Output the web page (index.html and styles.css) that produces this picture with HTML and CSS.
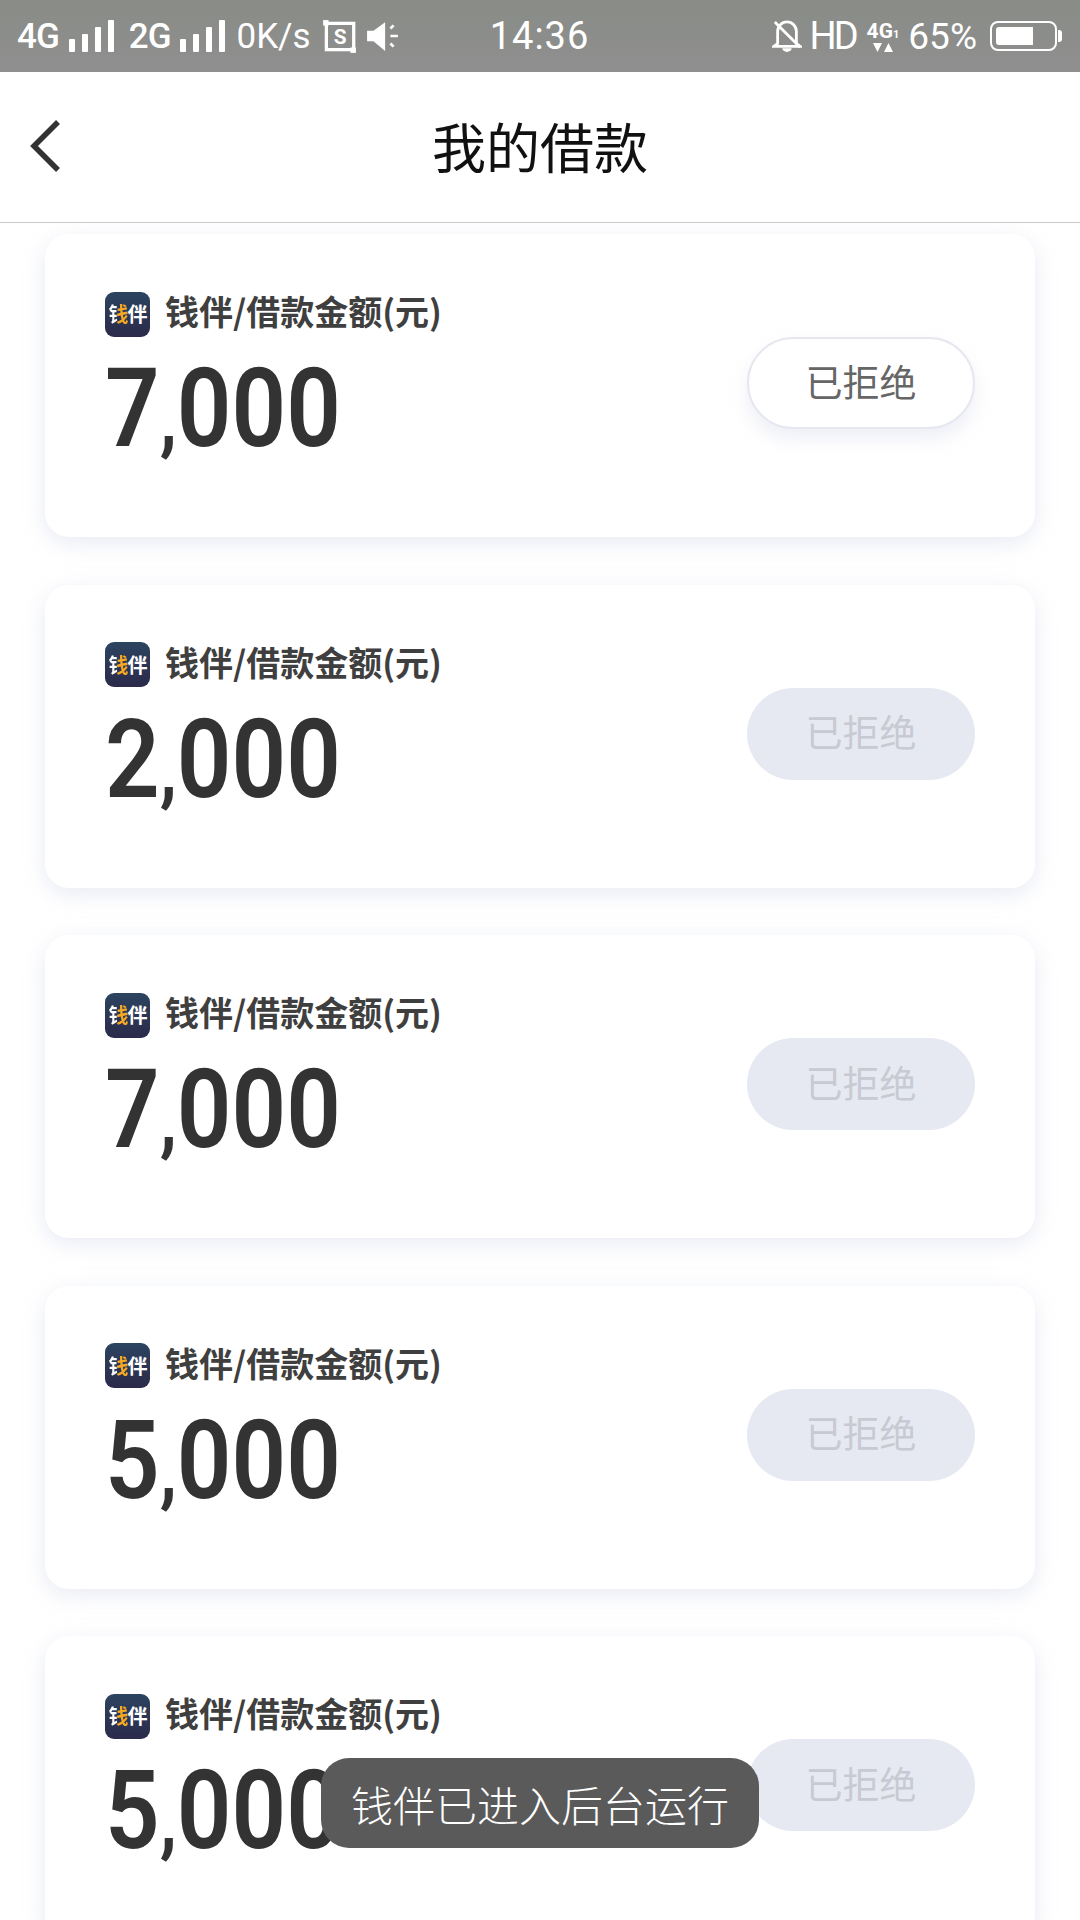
FILE: index.html
```html
<!DOCTYPE html>
<html lang="zh-CN">
<head>
    <meta charset="UTF-8">
    <meta name="viewport" content="width=device-width, initial-scale=1.0">
    <title>我的借款</title>
    <link rel="stylesheet" href="styles.css">
</head>
<body>
    <div class="phone">
        <div class="status-bar">
            <div class="status-left">
                <span class="net">4G</span>
                <svg class="signal" width="46" height="32" viewBox="0 0 46 32"><rect x="1" y="19" width="6" height="13" rx="1"/><rect x="14" y="14" width="6" height="18" rx="1"/><rect x="27" y="7" width="6" height="25" rx="1"/><rect x="40" y="0" width="6" height="32" rx="1"/></svg>
                <span class="net net-2g">2G</span>
                <svg class="signal" width="46" height="32" viewBox="0 0 46 32"><rect x="1" y="19" width="6" height="13" rx="1"/><rect x="14" y="14" width="6" height="18" rx="1"/><rect x="27" y="7" width="6" height="25" rx="1"/><rect x="40" y="0" width="6" height="32" rx="1"/></svg>
                <span class="speed">0K/s</span>
                <svg class="icon-shot" width="35" height="35" viewBox="0 0 32 32"><rect x="4" y="4" width="25" height="24" fill="none" stroke="#fff" stroke-width="3"/><rect x="1" y="1" width="5" height="5" fill="#fff"/><rect x="26" y="26" width="5" height="5" fill="#fff"/><text x="16.500" y="23" class="shot-letter">S</text></svg>
                <svg class="icon-sound" width="34" height="34" viewBox="0 0 32 32"><path d="M1 11h6L18 3v27L7 21H1z" fill="#fff"/><path d="M23 9l3-3M23 16h7M23 23l3 3" stroke="#fff" stroke-width="2.500" fill="none"/></svg>
            </div>
            <div class="status-time">14:36</div>
            <div class="status-right">
                <svg width="30" height="34" viewBox="0 0 32 34"><path d="M6 25V12a10 10 0 0 1 20 0v13l4 3H2z" fill="none" stroke="#fff" stroke-width="3"/><path d="M11 30h10a5 4 0 0 1-10 0z" fill="#fff"/><path d="M3 2l27 27" stroke="#fff" stroke-width="3"/></svg>
                <span class="hd">HD</span>
                <div class="net-small">
                    <span class="net-small-text">4G<small>1</small></span>
                    <svg width="20" height="10" viewBox="0 0 20 10"><path d="M0 1h9L4.500 10zM11 10h9L15.500 1z" fill="#fff"/></svg>
                </div>
                <span class="percent">65%</span>
                <div class="battery"><div class="battery-fill"></div></div>
                <div class="battery-tip"></div>
            </div>
        </div>

        <div class="header">
            <svg class="back" width="32" height="54" viewBox="0 0 32 54"><path d="M29 3L5 27l24 24" fill="none" stroke="#333" stroke-width="5.500"/></svg>
            <h1>我的借款</h1>
        </div>

        <div class="list">
            <div class="card">
                <div class="card-left">
                    <div class="card-title"><div class="logo"><span class="logo-qian">钱</span>伴</div><span class="card-label">钱伴/借款金额(元)</span></div>
                    <div class="amount">7<span class="comma">,</span>000</div>
                </div>
                <div class="btn btn-white">已拒绝</div>
            </div>
            <div class="card">
                <div class="card-left">
                    <div class="card-title"><div class="logo"><span class="logo-qian">钱</span>伴</div><span class="card-label">钱伴/借款金额(元)</span></div>
                    <div class="amount">2<span class="comma">,</span>000</div>
                </div>
                <div class="btn">已拒绝</div>
            </div>
            <div class="card">
                <div class="card-left">
                    <div class="card-title"><div class="logo"><span class="logo-qian">钱</span>伴</div><span class="card-label">钱伴/借款金额(元)</span></div>
                    <div class="amount">7<span class="comma">,</span>000</div>
                </div>
                <div class="btn">已拒绝</div>
            </div>
            <div class="card">
                <div class="card-left">
                    <div class="card-title"><div class="logo"><span class="logo-qian">钱</span>伴</div><span class="card-label">钱伴/借款金额(元)</span></div>
                    <div class="amount">5<span class="comma">,</span>000</div>
                </div>
                <div class="btn">已拒绝</div>
            </div>
            <div class="card">
                <div class="card-left">
                    <div class="card-title"><div class="logo"><span class="logo-qian">钱</span>伴</div><span class="card-label">钱伴/借款金额(元)</span></div>
                    <div class="amount">5<span class="comma">,</span>000</div>
                </div>
                <div class="btn">已拒绝</div>
            </div>
        </div>

        <div class="toast">钱伴已进入后台运行</div>
    </div>
</body>
</html>
```

FILE: styles.css
```css
* {
    box-sizing: border-box;
}
body {
    margin: 0;
    font-family: "Noto Sans CJK SC", Roboto, sans-serif;
    background-color: #fff;
}
.phone {
    position: relative;
    width: 1080px;
    height: 1920px;
    overflow: hidden;
    display: flex;
    flex-direction: column;
}

/* status bar */
.status-bar {
    height: 72px;
    flex-shrink: 0;
    padding: 0 18px 0 17px;
    display: grid;
    grid-template-columns: 1fr auto 1fr;
    align-items: center;
    color: #fff;
    background: linear-gradient(#898c87, #8f8f8f);
    font-family: Roboto, sans-serif;
}
.status-left,
.status-right {
    display: flex;
    align-items: center;
}
.status-right {
    justify-content: flex-end;
}
.net {
    font-size: 35px;
    font-weight: 500;
    letter-spacing: -1px;
}
.net-2g {
    margin-left: 15px;
}
.signal {
    fill: #fff;
    margin-left: 9px;
}
.speed {
    margin-left: 11px;
    font-size: 35px;
}
.icon-shot {
    margin-left: 11px;
}
.shot-letter {
    font-size: 19px;
    font-weight: 700;
    fill: #fff;
    text-anchor: middle;
}
.icon-sound {
    margin-left: 9px;
}
.status-time {
    font-size: 38px;
    letter-spacing: 1px;
}
.hd {
    margin-left: 8px;
    font-size: 38px;
    letter-spacing: -3px;
}
.net-small {
    margin-left: 11px;
    display: flex;
    flex-direction: column;
    align-items: center;
    line-height: 1;
}
.net-small-text {
    font-size: 21px;
    font-weight: 700;
}
.net-small-text small {
    font-size: 11px;
}
.percent {
    margin-left: 9px;
    font-size: 37px;
}
.battery {
    margin-left: 13px;
    width: 67px;
    height: 30px;
    padding: 4px;
    border: 2px solid #fff;
    border-radius: 8px;
}
.battery-fill {
    width: 68%;
    height: 100%;
    background-color: #fff;
    border-radius: 3px 0 0 3px;
}
.battery-tip {
    width: 4px;
    height: 12px;
    margin-left: 1px;
    background-color: #fff;
    border-radius: 0 3px 3px 0;
}

/* title bar */
.header {
    position: relative;
    height: 151px;
    flex-shrink: 0;
    padding-bottom: 3px;
    display: flex;
    align-items: center;
    justify-content: center;
    background-color: #fff;
    border-bottom: 1px solid #c9c9c9;
    z-index: 1;
}
.header h1 {
    margin: 0;
    font-size: 54px;
    font-weight: 400;
    color: #111;
}
.back {
    position: absolute;
    left: 29px;
    top: 47px;
}

/* loan cards */
.list {
    padding: 11px 45px 0;
    display: flex;
    flex-direction: column;
    gap: 47.5px;
}
.card {
    height: 303px;
    flex-shrink: 0;
    padding: 57px 60px 0 60px;
    display: flex;
    justify-content: space-between;
    align-items: flex-start;
    background-color: #fff;
    border-radius: 24px;
    box-shadow: 0 6px 22px rgba(200, 205, 228, 0.4);
}
.card-title {
    display: flex;
    align-items: center;
    gap: 15px;
    font-size: 34px;
    font-weight: 700;
    line-height: 46px;
    color: #3f3f3f;
}
.card-label {
    position: relative;
    top: -3px;
}
.logo {
    width: 45px;
    height: 45px;
    display: flex;
    align-items: center;
    justify-content: center;
    border-radius: 9px;
    background: linear-gradient(#2c4460, #2b2a4a);
    color: #fff;
    font-size: 20px;
    font-weight: 700;
    line-height: 1;
    letter-spacing: -1px;
}
.logo-qian {
    color: transparent;
    background: linear-gradient(90deg, #fff 42%, #f7a823 42%);
    -webkit-background-clip: text;
    background-clip: text;
}
.amount {
    margin-top: 17px;
    font-family: Roboto, sans-serif;
    font-size: 110px;
    font-weight: 600;
    line-height: 110px;
    color: #333;
    transform: scaleX(0.87);
    transform-origin: left center;
}
.comma {
    font-size: 84px;
}
.btn {
    width: 228px;
    height: 92px;
    margin-top: 46px;
    padding-bottom: 5px;
    display: flex;
    align-items: center;
    justify-content: center;
    border-radius: 46px;
    background-color: #e6e9f2;
    color: #c8cad3;
    font-size: 37px;
}
.btn-white {
    background-color: #fff;
    border: 2px solid #e6e7ef;
    color: #666;
    box-shadow: 0 10px 18px rgba(205, 210, 230, 0.35);
}

/* toast over the last card */
.toast {
    position: absolute;
    left: 321px;
    top: 1758px;
    width: 438px;
    height: 90px;
    display: flex;
    align-items: center;
    justify-content: center;
    border-radius: 28px;
    background-color: #5a5a5a;
    color: #fff;
    font-size: 42px;
    font-weight: 300;
}
```
